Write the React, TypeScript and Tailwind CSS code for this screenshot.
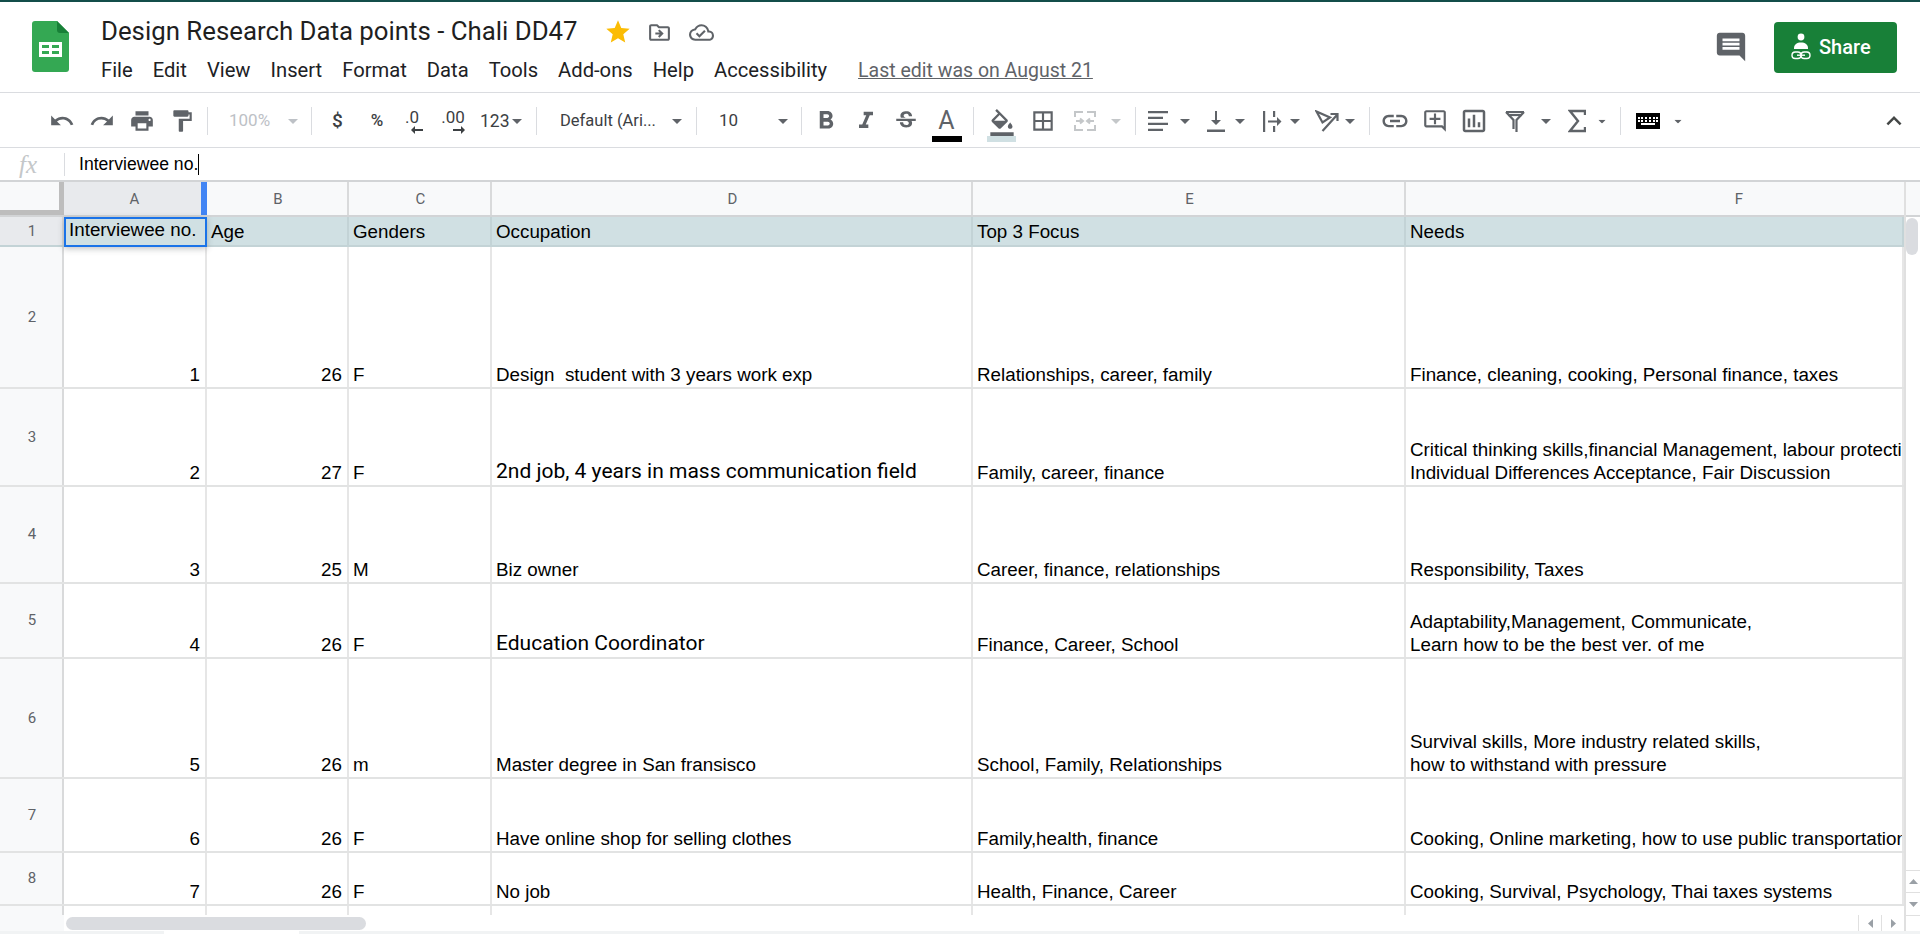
import type { ReactNode } from 'react'
import {
  MdUndo, MdRedo, MdPrint, MdFormatPaint, MdFormatBold, MdFormatItalic, MdStrikethroughS, MdFormatColorFill,
  MdBorderAll, MdLink, MdOutlineAddComment, MdOutlineInsertChart,
  MdExpandLess, MdInsertComment, MdStar, MdOutlineDriveFileMove, MdOutlineCloudDone,
} from 'react-icons/md'

const MENUS = ['File', 'Edit', 'View', 'Insert', 'Format', 'Data', 'Tools', 'Add-ons', 'Help', 'Accessibility']

type Row = { no: string; h: string; num: string; age: string; g: string; d: ReactNode; e: string; f: ReactNode; big?: boolean }

const ROWS: Row[] = [
  { no: '2', h: 'h-[142px]', num: '1', age: '26', g: 'F', d: 'Design  student with 3 years work exp', e: 'Relationships, career, family', f: 'Finance, cleaning, cooking, Personal finance, taxes' },
  { no: '3', h: 'h-[98px]', num: '2', age: '27', g: 'F', d: '2nd job, 4 years in mass communication field', big: true, e: 'Family, career, finance', f: <>Critical thinking skills,financial Management, labour protection<br />Individual Differences Acceptance, Fair Discussion</> },
  { no: '4', h: 'h-[97px]', num: '3', age: '25', g: 'M', d: 'Biz owner', e: 'Career, finance, relationships', f: 'Responsibility, Taxes' },
  { no: '5', h: 'h-[75px]', num: '4', age: '26', g: 'F', d: 'Education Coordinator', big: true, e: 'Finance, Career, School', f: <>Adaptability,Management, Communicate,<br />Learn how to be the best ver. of me</> },
  { no: '6', h: 'h-[120px]', num: '5', age: '26', g: 'm', d: 'Master degree in San fransisco', e: 'School, Family, Relationships', f: <>Survival skills, More industry related skills,<br />how to withstand with pressure</> },
  { no: '7', h: 'h-[74px]', num: '6', age: '26', g: 'F', d: 'Have online shop for selling clothes', e: 'Family,health, finance', f: 'Cooking, Online marketing, how to use public transportation' },
  { no: '8', h: 'h-[53px]', num: '7', age: '26', g: 'F', d: 'No job', e: 'Health, Finance, Career', f: 'Cooking, Survival, Psychology, Thai taxes systems' },
]

function Caret({ className = '' }: { className?: string }) {
  return (
    <svg width="10" height="5" viewBox="0 0 10 5" className={`shrink-0 ${className}`}>
      <path d="M0 0h10L5 5z" fill="currentColor" />
    </svg>
  )
}

function Sep({ className }: { className: string }) {
  return <div className={`h-[28px] w-px shrink-0 bg-[#dadce0] ${className}`} />
}

function Tool({ children, className = '' }: { children: ReactNode; className?: string }) {
  return <div className={`flex h-[30px] w-[40px] shrink-0 items-center justify-center text-[#5f6368] ${className}`}>{children}</div>
}

function SheetsLogo() {
  return (
    <svg width="37" height="51" viewBox="0 0 37 51">
      <path d="M3 0h22l12 12v36a3 3 0 0 1-3 3H3a3 3 0 0 1-3-3V3a3 3 0 0 1 3-3z" fill="#34a853" />
      <path d="M25 0l12 12H28a3 3 0 0 1-3-3z" fill="#188038" />
      <path d="M7 21h23v15H7z" fill="#fff" />
      <path d="M10 24h7v3h-7zM20 24h7v3h-7zM10 30h7v3h-7zM20 30h7v3h-7z" fill="#34a853" />
    </svg>
  )
}

function ShareIcon() {
  return (
    <svg width="22" height="28" viewBox="0 0 22 28" fill="#fff">
      <circle cx="11" cy="4" r="3.4" />
      <path d="M4 15c0-3.5 3-5.500 7-5.500s7 2 7 5.500v1H4z" />
      <rect x="2" y="19" width="9" height="6.500" rx="3.200" fill="none" stroke="#fff" strokeWidth="1.400" />
      <rect x="11" y="19" width="9" height="6.500" rx="3.200" fill="none" stroke="#fff" strokeWidth="1.400" />
      <path d="M7 22.200h8" stroke="#fff" strokeWidth="1.400" />
    </svg>
  )
}

function Header() {
  return (
    <div className="flex h-[93px] shrink-0 border-b border-t-2 border-[#dadce0] border-t-[#134e4a] bg-white">
      <div className="ml-[32px] mt-[19px] shrink-0"><SheetsLogo /></div>
      <div className="ml-[32px] flex flex-col">
        <div className="mt-[13px] flex h-[32px] items-center">
          <span className="text-[25.800px] text-[#1f1f1f] font-['Roboto',sans-serif]">Design Research Data points - Chali DD47</span>
          <MdStar className="ml-[26px] mt-[2px] text-[#fbbc04]" size={28} />
          <MdOutlineDriveFileMove className="ml-[15px] mt-[2px] text-[#5f6368]" size={25} />
          <MdOutlineCloudDone className="ml-[17px] mt-[2px] text-[#5f6368]" size={25} />
        </div>
        <div className="mt-[8px] flex items-center gap-[20px] text-[20.200px] text-[#202124] font-['Roboto',sans-serif]">
          {MENUS.map(m => <span key={m}>{m}</span>)}
          <span className="ml-[11px] text-[19.500px] text-[#5f6368] underline">Last edit was on August 21</span>
        </div>
      </div>
      <div className="ml-auto flex items-center pr-[23px]">
        <MdInsertComment className="mr-[26px] text-[#5f6368]" size={34} />
        <div className="flex h-[51px] w-[123px] items-center rounded-[4px] bg-[#188038] pl-[16px] text-white">
          <ShareIcon />
          <span className="ml-[7px] text-[20px] font-medium font-['Roboto',sans-serif]">Share</span>
        </div>
      </div>
    </div>
  )
}

function Toolbar() {
  const ic = 26
  return (
    <div className="flex h-[55px] shrink-0 items-center border-b border-[#dadce0] bg-white pl-[42px] pt-[2px] font-['Roboto',sans-serif]">
      <Tool><MdUndo size={ic} /></Tool>
      <Tool><MdRedo size={ic} /></Tool>
      <Tool><MdPrint size={ic} /></Tool>
      <Tool><MdFormatPaint size={ic} /></Tool>
      <Sep className="ml-[5px]" />
      <span className="ml-[21px] w-[40px] shrink-0 text-[17px] text-[#bdc1c6]">100%</span>
      <Caret className="ml-[19px] text-[#bdc1c6]" />
      <Sep className="ml-[13px]" />
      <span className="ml-[20px] w-[10px] shrink-0 text-center text-[19px] font-medium text-[#3c4043]">$</span>
      <span className="ml-[27px] w-[16px] shrink-0 text-center text-[17px] font-medium text-[#3c4043]">%</span>
      <div className="ml-[15px] flex w-[24px] shrink-0 flex-col items-center text-[#3c4043]">
        <span className="h-[18px] text-[17px] leading-[18px]">.0</span>
        <svg width="12" height="8" viewBox="0 0 12 8" className="ml-[10px]"><path d="M12 3H4V0L0 4l4 4V5h8z" fill="currentColor" /></svg>
      </div>
      <div className="ml-[16px] flex w-[26px] shrink-0 flex-col items-center text-[#3c4043]">
        <span className="h-[18px] text-[17px] leading-[18px]">.00</span>
        <svg width="12" height="8" viewBox="0 0 12 8" className="ml-[12px]"><path d="M0 3h8V0l4 4-4 4V5H0z" fill="currentColor" /></svg>
      </div>
      <span className="ml-[14px] w-[29px] shrink-0 text-[17.500px] text-[#3c4043]">123</span>
      <Caret className="ml-[3px] text-[#5f6368]" />
      <Sep className="ml-[14px]" />
      <span className="ml-[23px] w-[97px] shrink-0 text-[16.500px] whitespace-nowrap text-[#3c4043]">Default (Ari...</span>
      <Caret className="ml-[15px] text-[#5f6368]" />
      <Sep className="ml-[14px]" />
      <span className="ml-[22px] w-[18px] shrink-0 text-[17px] text-[#3c4043]">10</span>
      <Caret className="ml-[41px] text-[#5f6368]" />
      <Sep className="ml-[13px]" />
      <Tool className="ml-[4px]"><MdFormatBold size={30} /></Tool>
      <Tool><MdFormatItalic size={28} /></Tool>
      <Tool><MdStrikethroughS size={26} /></Tool>
      <div className="flex h-[42px] w-[41px] shrink-0 flex-col items-center justify-end">
        <span className="h-[26px] text-[25px] leading-[26px] text-[#5f6368] font-['Roboto',sans-serif]">A</span>
        <div className="mt-[2px] h-[6px] w-[30px] bg-black" />
      </div>
      <Sep className="ml-[6px]" />
      <div className="ml-[13px] flex h-[42px] w-[29px] shrink-0 flex-col items-center justify-end">
        <MdFormatColorFill size={28} className="text-[#5f6368]" />
        <div className="mt-[-1px] h-[6px] w-[29px] shrink-0 bg-[#d0e0e3]" />
      </div>
      <Tool className="ml-[7px]"><MdBorderAll size={26} /></Tool>
      <Tool className="ml-[2px] text-[#c4c7c9]">
        <svg width="24" height="24" viewBox="0 0 24 24" fill="none" stroke="currentColor" strokeWidth="2">
          <path d="M2 8V3h8M14 3h8v5M2 16v5h8M14 21h8v-5M3 12h6M7 9.500 10 12l-3 2.500M21 12h-6M17 9.500 14 12l3 2.500" />
        </svg>
      </Tool>
      <Caret className="ml-[6px] text-[#c4c7c9]" />
      <Sep className="ml-[14px]" />
      <Tool className="ml-[2px]">
        <svg width="20" height="20" viewBox="0 0 20 20" fill="currentColor">
          <path d="M0 0h20v2.200H0zM0 5.800h15V8H0zM0 11.800h20V14H0zM0 17.800h15V20H0z" />
        </svg>
      </Tool>
      <Caret className="ml-[2px] text-[#5f6368]" />
      <Tool className="ml-[6px]">
        <svg width="18" height="21" viewBox="0 0 18 21" fill="currentColor">
          <path d="M8 0h2v9h4l-5 5-5-5h4zM0 18.500h18V21H0z" />
        </svg>
      </Tool>
      <Caret className="ml-[-1px] text-[#5f6368]" />
      <Tool className="ml-[7px]">
        <svg width="20" height="21" viewBox="0 0 20 21" fill="currentColor">
          <path d="M1 0h2.200v21H1zM11 0h2.200v6H11zM11 15h2.200v6H11zM6 9.500h9V6l4.500 4.500L15 15v-3.400H6z" />
        </svg>
      </Tool>
      <Caret className="ml-[-2px] text-[#5f6368]" />
      <Tool className="ml-[7px]">
        <svg width="24" height="22" viewBox="0 0 24 22" fill="none" stroke="currentColor" strokeWidth="2.200">
          <path d="M1.500 1.500 15 7.500 7.500 12.500zM7.500 21 22 5M15.500 4h7v7" />
        </svg>
      </Tool>
      <Caret className="ml-[-2px] text-[#5f6368]" />
      <Sep className="ml-[14px]" />
      <Tool className="ml-[5px]"><MdLink size={30} /></Tool>
      <Tool><MdOutlineAddComment size={26} /></Tool>
      <Tool className="ml-[-1px]"><MdOutlineInsertChart size={30} /></Tool>
      <Tool className="ml-[1px]">
        <svg width="24" height="24" viewBox="0 0 24 24" fill="none" stroke="currentColor" strokeWidth="2.200">
          <path d="M3 3h18M21 3l-7.500 8v12M3 3l7.500 8v9" />
          <path d="M5 6h14" />
        </svg>
      </Tool>
      <Caret className="ml-[6px] text-[#5f6368]" />
      <Tool className="ml-[6px]">
        <svg width="18" height="24" viewBox="0 0 18 24" fill="none" stroke="currentColor" strokeWidth="2.400">
          <path d="M17 6V2H2l8 10-8 10h15v-4" />
        </svg>
      </Tool>
      <Caret className="scale-75 text-[#5f6368]" />
      <Sep className="ml-[13px]" />
      <div className="ml-[15px] flex h-[16px] w-[24px] shrink-0 flex-col justify-center gap-[1px] bg-black px-[2px]">
        <div className="h-[2px] border-t-2 border-dotted border-white" />
        <div className="h-[2px] border-t-2 border-dotted border-white" />
        <div className="mx-auto h-[2px] w-[14px] bg-white" />
      </div>
      <Caret className="ml-[13px] scale-75 text-[#5f6368]" />
      <MdExpandLess className="ml-auto mr-[11px] text-[#444746]" size={30} />
    </div>
  )
}

function FormulaBar() {
  return (
    <div className="flex h-[34px] shrink-0 items-center border-b-2 border-[#d2d4d6] bg-white">
      <span className="ml-[19px] w-[45px] text-[25px] italic leading-none text-[#c4c7c9] font-['Liberation_Serif',serif]">fx</span>
      <div className="h-[23px] w-px bg-[#dadce0]" />
      <span className="ml-[14px] text-[17.600px] text-black font-['Liberation_Sans',sans-serif]">Interviewee no.</span>
      <div className="h-[21px] w-px bg-black" />
    </div>
  )
}

function ColHead({ w, label, active }: { w: string; label: string; active?: boolean }) {
  return (
    <div className={`flex h-full items-center justify-center border-r-2 border-[#d9dadb] pt-[2px] text-[15px] text-[#5f6368] font-['Roboto',sans-serif] ${w} ${active ? 'border-r-[6px] border-r-[#4285f4] bg-[#e8eaed] pl-[4px]' : 'pl-[2px]'}`}>
      {label}
    </div>
  )
}

const CELL = 'flex h-full shrink-0 overflow-hidden border-r-2 border-[#e6e6e6] px-[4px] pb-[1px] whitespace-pre items-end'

function DataRow({ r }: { r: Row }) {
  return (
    <div className={`flex border-b-2 border-[#e2e3e3] text-[18.800px] leading-[22.500px] text-black font-['Liberation_Sans',sans-serif] ${r.h}`}>
      <div className="flex h-full w-[64px] shrink-0 items-center justify-center border-r-2 border-[#d9dadb] bg-[#f8f9fa] pl-[2px] text-[15px] text-[#5f6368] font-['Roboto',sans-serif]">{r.no}</div>
      <div className={`${CELL} w-[143px] justify-end pr-[5px]`}>{r.num}</div>
      <div className={`${CELL} w-[142px] justify-end pr-[5px]`}>{r.age}</div>
      <div className={`${CELL} w-[143px]`}>{r.g}</div>
      <div className={`${CELL} w-[481px] ${r.big ? "pb-[3px] text-[21px] font-['Roboto',sans-serif]" : ''}`}>{r.d}</div>
      <div className={`${CELL} w-[433px]`}>{r.e}</div>
      <div className={`${CELL} w-[498px] border-r-0`}><div>{r.f}</div></div>
    </div>
  )
}

function Grid() {
  const heads = 'flex h-full shrink-0 items-end overflow-hidden border-r-2 border-[#c3d3d6] px-[4px] pb-[2px]'
  return (
    <div className="flex min-h-0 flex-1 bg-white">
      <div className="flex w-[1904px] shrink-0 flex-col">
        <div className="flex h-[35px] shrink-0 border-b-2 border-[#d2d4d6] bg-[#f8f9fa]">
          <div className="h-full w-[64px] border-b-[5px] border-r-[5px] border-[#bdbdbd] bg-[#f8f9fa]" />
          <ColHead w="w-[143px]" label="A" active />
          <ColHead w="w-[142px]" label="B" />
          <ColHead w="w-[143px]" label="C" />
          <ColHead w="w-[481px]" label="D" />
          <ColHead w="w-[433px]" label="E" />
          <div className="flex h-full w-[498px] items-center justify-center pl-[168px] pt-[2px] text-[15px] text-[#5f6368] font-['Roboto',sans-serif]">F</div>
        </div>
        <div className="flex h-[30px] shrink-0 border-b-2 border-[#c3d3d6] bg-[#d0e0e3] text-[18.800px] leading-[22.500px] text-black font-['Liberation_Sans',sans-serif]">
          <div className="flex h-full w-[64px] shrink-0 items-center justify-center border-r-2 border-[#d9dadb] bg-[#e8eaed] pl-[2px] text-[15px] text-[#5f6368] font-['Roboto',sans-serif]">1</div>
          <div className="z-10 mb-[-2px] flex h-[30px] w-[143px] shrink-0 items-start overflow-hidden border-2 border-[#1a73e8] px-[3px] shadow-[0_2px_6px_rgba(60,64,67,0.3)]">Interviewee no.</div>
          <div className={`${heads} w-[142px]`}>Age</div>
          <div className={`${heads} w-[143px]`}>Genders</div>
          <div className={`${heads} w-[481px]`}>Occupation</div>
          <div className={`${heads} w-[433px]`}>Top 3 Focus</div>
          <div className={`${heads} w-[498px] border-r-0`}>Needs</div>
        </div>
        {ROWS.map(r => <DataRow key={r.no} r={r} />)}
        <div className="flex h-[9px] shrink-0">
          <div className="h-full w-[64px] shrink-0 border-r-2 border-[#d9dadb] bg-[#f8f9fa]" />
          <div className="h-full w-[143px] shrink-0 border-r-2 border-[#e6e6e6]" />
          <div className="h-full w-[142px] shrink-0 border-r-2 border-[#e6e6e6]" />
          <div className="h-full w-[143px] shrink-0 border-r-2 border-[#e6e6e6]" />
          <div className="h-full w-[481px] shrink-0 border-r-2 border-[#e6e6e6]" />
          <div className="h-full w-[433px] shrink-0 border-r-2 border-[#e6e6e6]" />
        </div>
        <div className="flex h-[16px] shrink-0">
          <div className="h-full w-[64px] shrink-0 bg-[#f8f9fa]" />
          <div className="ml-[2px] mt-[2px] h-[13px] w-[300px] rounded-[7px] bg-[#dadce0]" />
          <div className="ml-auto flex h-full w-[46px] text-[#9aa0a6]">
            <div className="flex w-[23px] items-center justify-center border-l border-[#e0e0e0]">
              <svg width="5" height="9" viewBox="0 0 5 9"><path d="M5 0v9L0 4.500z" fill="currentColor" /></svg>
            </div>
            <div className="flex w-[23px] items-center justify-center border-l border-[#e0e0e0]">
              <svg width="5" height="9" viewBox="0 0 5 9"><path d="M0 0v9l5-4.500z" fill="currentColor" /></svg>
            </div>
          </div>
        </div>
      </div>
      <div className="flex w-[16px] shrink-0 flex-col border-l-2 border-[#e0e0e0]">
        <div className="h-[35px] shrink-0 border-b-2 border-[#d2d4d6] bg-[#f8f9fa]" />
        <div className="mt-px h-[37px] w-[12px] shrink-0 rounded-[6px] bg-[#dadce0]" />
        <div className="flex-1" />
        <div className="flex h-[22px] items-center justify-center border-t border-[#e0e0e0] text-[#9aa0a6]">
          <svg width="9" height="5" viewBox="0 0 9 5"><path d="M0 5h9L4.500 0z" fill="currentColor" /></svg>
        </div>
        <div className="flex h-[23px] items-center justify-center border-t border-[#e0e0e0] text-[#9aa0a6]">
          <svg width="9" height="5" viewBox="0 0 9 5"><path d="M0 0h9L4.500 5z" fill="currentColor" /></svg>
        </div>
        <div className="h-[16px] border-t border-[#e0e0e0]" />
      </div>
    </div>
  )
}

export default function App() {
  return (
    <div className="flex h-[934px] w-[1920px] flex-col overflow-hidden bg-white">
      <Header />
      <Toolbar />
      <FormulaBar />
      <Grid />
      <div className="flex h-[3px] shrink-0 bg-[#f1f3f4]">
        <div className="ml-[164px] h-full w-[135px] bg-white" />
      </div>
    </div>
  )
}
